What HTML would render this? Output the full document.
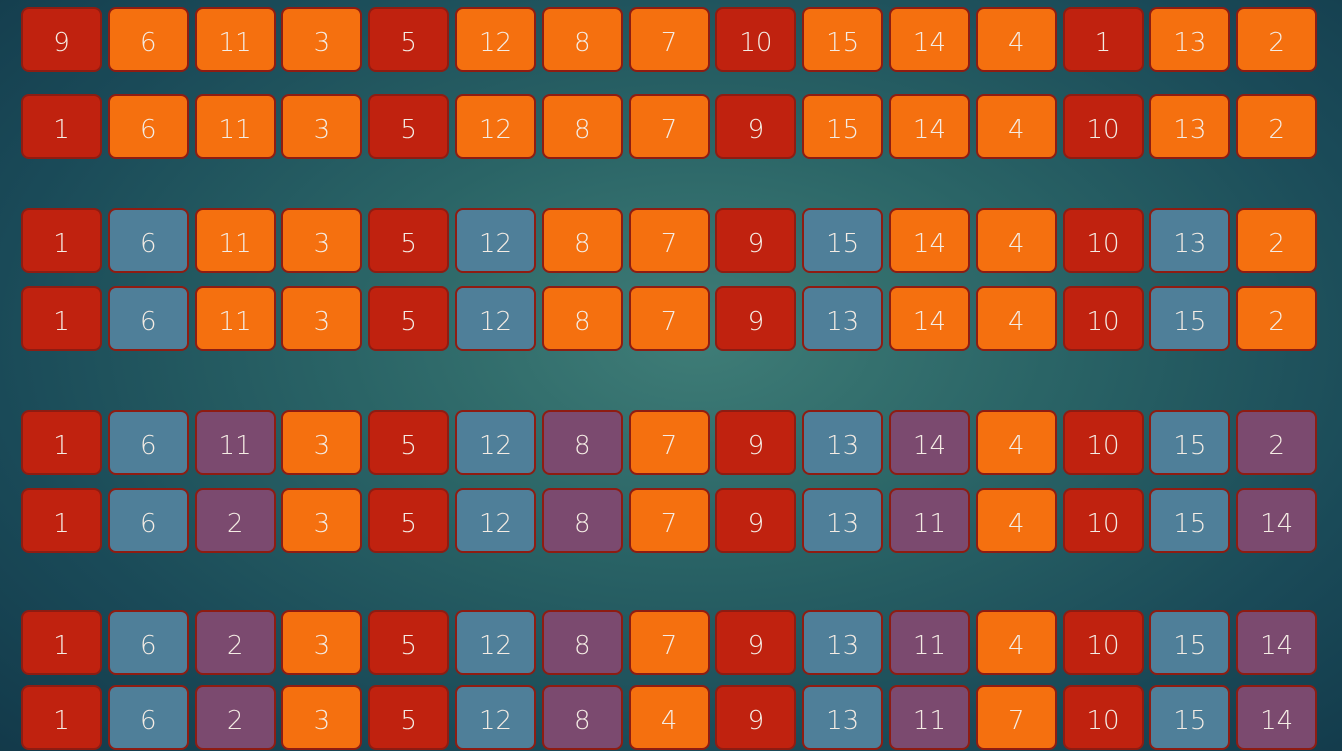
<!DOCTYPE html>
<html><head><meta charset="utf-8"><style>
html,body{margin:0;padding:0}
body{width:1342px;height:751px;overflow:hidden;position:relative;
background:radial-gradient(ellipse 75% 80% at 52% 45%,#3f7d77 0%,#2a6466 35%,#1a4a58 70%,#123849 100%);
font-family:"DejaVu Sans","Liberation Sans",sans-serif}
.row{position:absolute;left:21px;display:flex;gap:5.8px}
.b{width:77px;height:55px;padding-top:6px;border:2px solid #8e1c12;border-radius:8px;color:#f4ece4;
font-size:26px;font-weight:300;display:flex;align-items:center;justify-content:center;box-sizing:content-box;line-height:1}
.R{background:#c0220f}.O{background:#f5700f}.B{background:#4f7f99}.P{background:#7b4a6f}
</style></head><body>
<div class="row" style="top:7px"><div class="b R">9</div><div class="b O">6</div><div class="b O">11</div><div class="b O">3</div><div class="b R">5</div><div class="b O">12</div><div class="b O">8</div><div class="b O">7</div><div class="b R">10</div><div class="b O">15</div><div class="b O">14</div><div class="b O">4</div><div class="b R">1</div><div class="b O">13</div><div class="b O">2</div></div>
<div class="row" style="top:94px"><div class="b R">1</div><div class="b O">6</div><div class="b O">11</div><div class="b O">3</div><div class="b R">5</div><div class="b O">12</div><div class="b O">8</div><div class="b O">7</div><div class="b R">9</div><div class="b O">15</div><div class="b O">14</div><div class="b O">4</div><div class="b R">10</div><div class="b O">13</div><div class="b O">2</div></div>
<div class="row" style="top:208px"><div class="b R">1</div><div class="b B">6</div><div class="b O">11</div><div class="b O">3</div><div class="b R">5</div><div class="b B">12</div><div class="b O">8</div><div class="b O">7</div><div class="b R">9</div><div class="b B">15</div><div class="b O">14</div><div class="b O">4</div><div class="b R">10</div><div class="b B">13</div><div class="b O">2</div></div>
<div class="row" style="top:286px"><div class="b R">1</div><div class="b B">6</div><div class="b O">11</div><div class="b O">3</div><div class="b R">5</div><div class="b B">12</div><div class="b O">8</div><div class="b O">7</div><div class="b R">9</div><div class="b B">13</div><div class="b O">14</div><div class="b O">4</div><div class="b R">10</div><div class="b B">15</div><div class="b O">2</div></div>
<div class="row" style="top:410px"><div class="b R">1</div><div class="b B">6</div><div class="b P">11</div><div class="b O">3</div><div class="b R">5</div><div class="b B">12</div><div class="b P">8</div><div class="b O">7</div><div class="b R">9</div><div class="b B">13</div><div class="b P">14</div><div class="b O">4</div><div class="b R">10</div><div class="b B">15</div><div class="b P">2</div></div>
<div class="row" style="top:488px"><div class="b R">1</div><div class="b B">6</div><div class="b P">2</div><div class="b O">3</div><div class="b R">5</div><div class="b B">12</div><div class="b P">8</div><div class="b O">7</div><div class="b R">9</div><div class="b B">13</div><div class="b P">11</div><div class="b O">4</div><div class="b R">10</div><div class="b B">15</div><div class="b P">14</div></div>
<div class="row" style="top:610px"><div class="b R">1</div><div class="b B">6</div><div class="b P">2</div><div class="b O">3</div><div class="b R">5</div><div class="b B">12</div><div class="b P">8</div><div class="b O">7</div><div class="b R">9</div><div class="b B">13</div><div class="b P">11</div><div class="b O">4</div><div class="b R">10</div><div class="b B">15</div><div class="b P">14</div></div>
<div class="row" style="top:685px"><div class="b R">1</div><div class="b B">6</div><div class="b P">2</div><div class="b O">3</div><div class="b R">5</div><div class="b B">12</div><div class="b P">8</div><div class="b O">4</div><div class="b R">9</div><div class="b B">13</div><div class="b P">11</div><div class="b O">7</div><div class="b R">10</div><div class="b B">15</div><div class="b P">14</div></div>
</body></html>
